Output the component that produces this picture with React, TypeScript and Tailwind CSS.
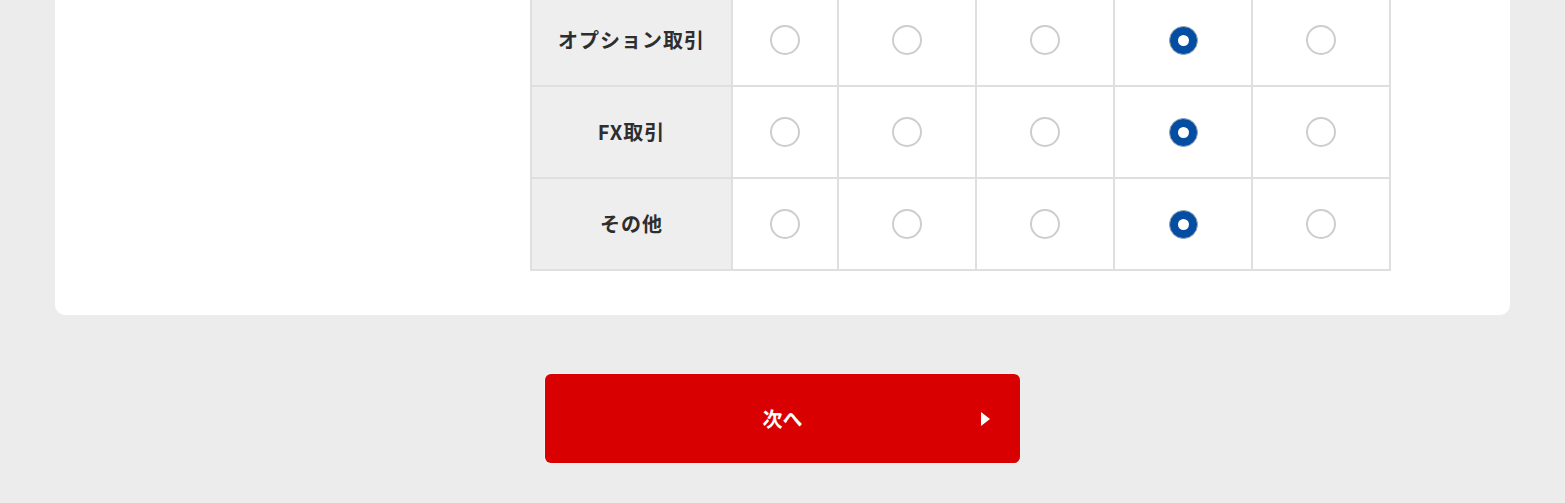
import React from "react";

const rows = [
  { label: "オプション取引", checked: 3 },
  { label: "FX取引", checked: 3 },
  { label: "その他", checked: 3 },
];

function Radio({ checked }: { checked: boolean }) {
  if (checked) {
    return (
      <span className="flex h-[29px] w-[29px] items-center justify-center rounded-full border border-[#9aa6b8] bg-[#034ea2]">
        <span className="block h-[11px] w-[11px] rounded-full bg-white" />
      </span>
    );
  }
  return <span className="block h-[30px] w-[30px] rounded-full border-2 border-[#cdcdcd] bg-white" />;
}

export default function App() {
  return (
    <div
      className="min-h-[503px] w-full overflow-hidden bg-[#ececec] pb-[40px]"
      style={{ fontFamily: '"Noto Sans CJK JP", "Noto Sans", sans-serif' }}
    >
      <div className="mx-auto -mt-[7px] w-[1455px] rounded-b-[10px] bg-white pb-[44px]">
        <div className="flex">
          <div className="w-[475px] shrink-0" />
          <div className="grid w-[861px] grid-cols-[199px_104px_136px_136px_136px_136px] gap-[2px] bg-[#dfdfdf] p-[2px]">
            {rows.map((r) => (
              <React.Fragment key={r.label}>
                <div className="flex h-[90px] items-center justify-center bg-[#eeeeee] text-[20px] font-bold tracking-[0.05em] text-[#2e2e2e]">
                  {r.label}
                </div>
                {[0, 1, 2, 3, 4].map((i) => (
                  <div key={i} className="flex h-[90px] items-center justify-center bg-white">
                    <Radio checked={i === r.checked} />
                  </div>
                ))}
              </React.Fragment>
            ))}
          </div>
        </div>
      </div>
      <div className="mt-[59px] flex justify-center">
        <button className="relative flex h-[89px] w-[475px] items-center justify-center rounded-[6px] bg-[#d80000] text-[20px] font-bold text-white shadow-[0_0_0_1px_#f4f4f4]">
          次へ
          <span className="absolute right-[30px] top-1/2 -translate-y-1/2 border-y-[7.5px] border-l-[9px] border-y-transparent border-l-white" />
        </button>
      </div>
    </div>
  );
}
